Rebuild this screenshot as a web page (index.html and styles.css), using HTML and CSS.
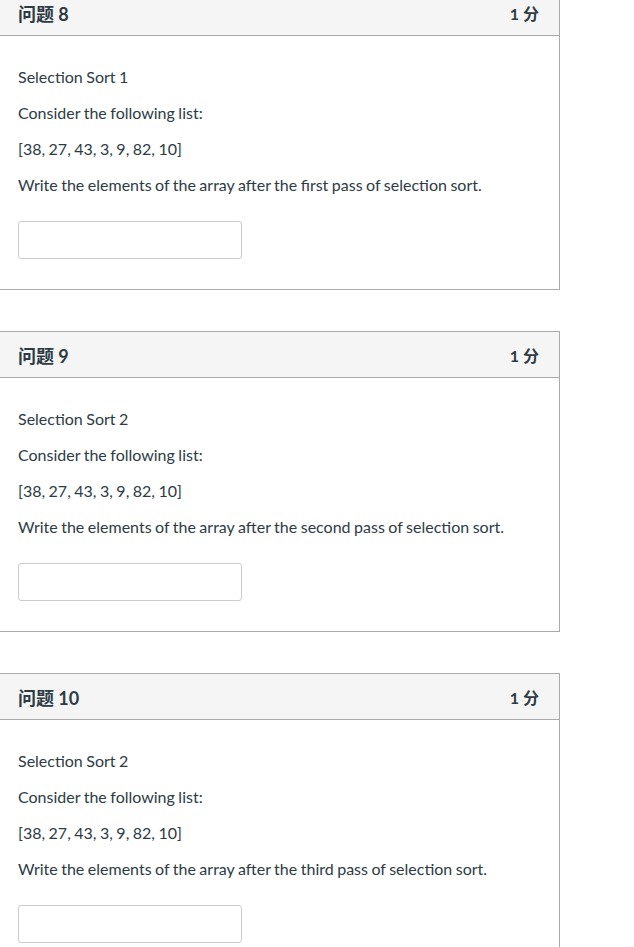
FILE: index.html
```html
<!DOCTYPE html>
<html lang="zh">
<head>
    <meta charset="UTF-8">
    <title>测验</title>
    <link rel="stylesheet" href="styles.css">
</head>
<body>

<div class="quiz">

    <!-- 问题 8 -->
    <div class="question">
        <div class="question-header">
            <span class="question-name">问题 8</span>
            <span class="question-points">1 分</span>
        </div>
        <div class="question-body">
            <p>Selection Sort 1</p>
            <p>Consider the following list:</p>
            <p>[38, 27, 43, 3, 9, 82, 10]</p>
            <p>Write the elements of the array after the first pass of selection sort.</p>
            <input type="text" class="answer">
        </div>
    </div>

    <!-- 问题 9 -->
    <div class="question">
        <div class="question-header">
            <span class="question-name">问题 9</span>
            <span class="question-points">1 分</span>
        </div>
        <div class="question-body">
            <p>Selection Sort 2</p>
            <p>Consider the following list:</p>
            <p>[38, 27, 43, 3, 9, 82, 10]</p>
            <p>Write the elements of the array after the second pass of selection sort.</p>
            <input type="text" class="answer">
        </div>
    </div>

    <!-- 问题 10 -->
    <div class="question">
        <div class="question-header">
            <span class="question-name">问题 10</span>
            <span class="question-points">1 分</span>
        </div>
        <div class="question-body">
            <p>Selection Sort 2</p>
            <p>Consider the following list:</p>
            <p>[38, 27, 43, 3, 9, 82, 10]</p>
            <p>Write the elements of the array after the third pass of selection sort.</p>
            <input type="text" class="answer">
        </div>
    </div>

</div>

</body>
</html>
```

FILE: styles.css
```css
body {
    margin: 0;
    font-family: Lato, "Noto Sans CJK SC", sans-serif;
    color: #2d3b45;
    background-color: white;
}
.quiz {
    width: 561px;
    margin-top: -11px;
    margin-left: -1px;
}
.question {
    border: 1px solid #aaa;
    margin-bottom: 41px;
}
.question-header {
    display: flex;
    justify-content: space-between;
    align-items: center;
    height: 45px;
    padding: 0 20px 0 18px;
    background-color: #f5f5f5;
    border-bottom: 1px solid #aaa;
}
.question-name {
    font-size: 18px;
    font-weight: bold;
}
.question-points {
    font-size: 16px;
    font-weight: bold;
}
.question-body {
    padding: 29px 18px 30px 18px;
}
.question-body p {
    margin: 0 0 12px 0;
    font-size: 16px;
    line-height: 24px;
    word-spacing: -0.6px;
}
.question-body p:last-of-type {
    margin-bottom: 24px;
}
.answer {
    display: block;
    box-sizing: border-box;
    width: 224px;
    height: 38px;
    margin: 0;
    border: 1px solid #ccc;
    border-radius: 3px;
    background-color: white;
}
```
